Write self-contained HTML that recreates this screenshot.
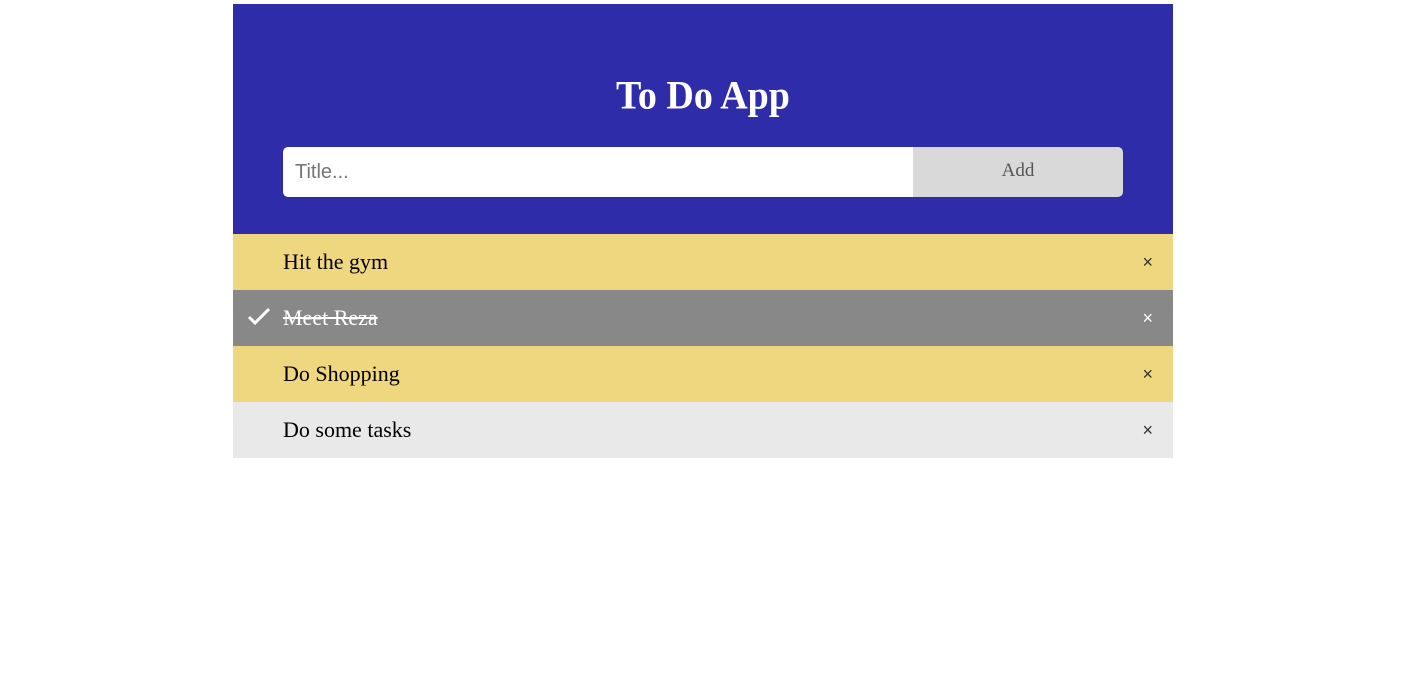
<!DOCTYPE html>
<html><head><meta charset="utf-8"><style>
body{margin:0;background:#fff;width:1420px;height:692px;overflow:hidden}
.wrap{position:absolute;left:233px;top:4px;width:940px}
.head{background:#2e2ca8;height:230px;position:relative}
h2{margin:0;position:absolute;top:68px;left:0;right:0;text-align:center;color:#fff;font:bold 38px "Liberation Serif",serif;line-height:48px;transform:scaleY(1.06)}
.inp{position:absolute;left:50px;top:143px;width:630px;height:50px;background:#fff;border-radius:5px 0 0 5px;font:20px "Liberation Sans",sans-serif;color:#757575;line-height:50px;padding-left:12px;box-sizing:border-box}
.btn{position:absolute;left:680px;top:143px;width:210px;height:50px;background:#d9d9d9;border-radius:0 5px 5px 0;text-align:center;font:19px "Liberation Serif",serif;color:#555;line-height:48px}
.row{height:56px;position:relative;font:22px "Liberation Serif",serif;line-height:56px;padding-left:50px}
.x{position:absolute;right:20px;top:0;font:18px "Liberation Sans",sans-serif;line-height:56px;color:#333}
.y{background:#efd780}.g{background:#888;color:#fff;text-decoration:line-through}.l{background:#e9e9e9}
</style></head><body><div class="wrap">
<div class="head"><h2>To Do App</h2><div class="inp">Title...</div><div class="btn">Add</div></div>
<div class="row y">Hit the gym<span class="x">×</span></div>
<div class="row g"><svg style="position:absolute;left:14px;top:17px" width="24" height="20" viewBox="0 0 24 20"><path d="M2 10 L8 16 L22 2" stroke="#fff" stroke-width="3" fill="none"/></svg>Meet Reza<span class="x" style="color:#fff">×</span></div>
<div class="row y">Do Shopping<span class="x">×</span></div>
<div class="row l">Do some tasks<span class="x">×</span></div>
</div></body></html>
